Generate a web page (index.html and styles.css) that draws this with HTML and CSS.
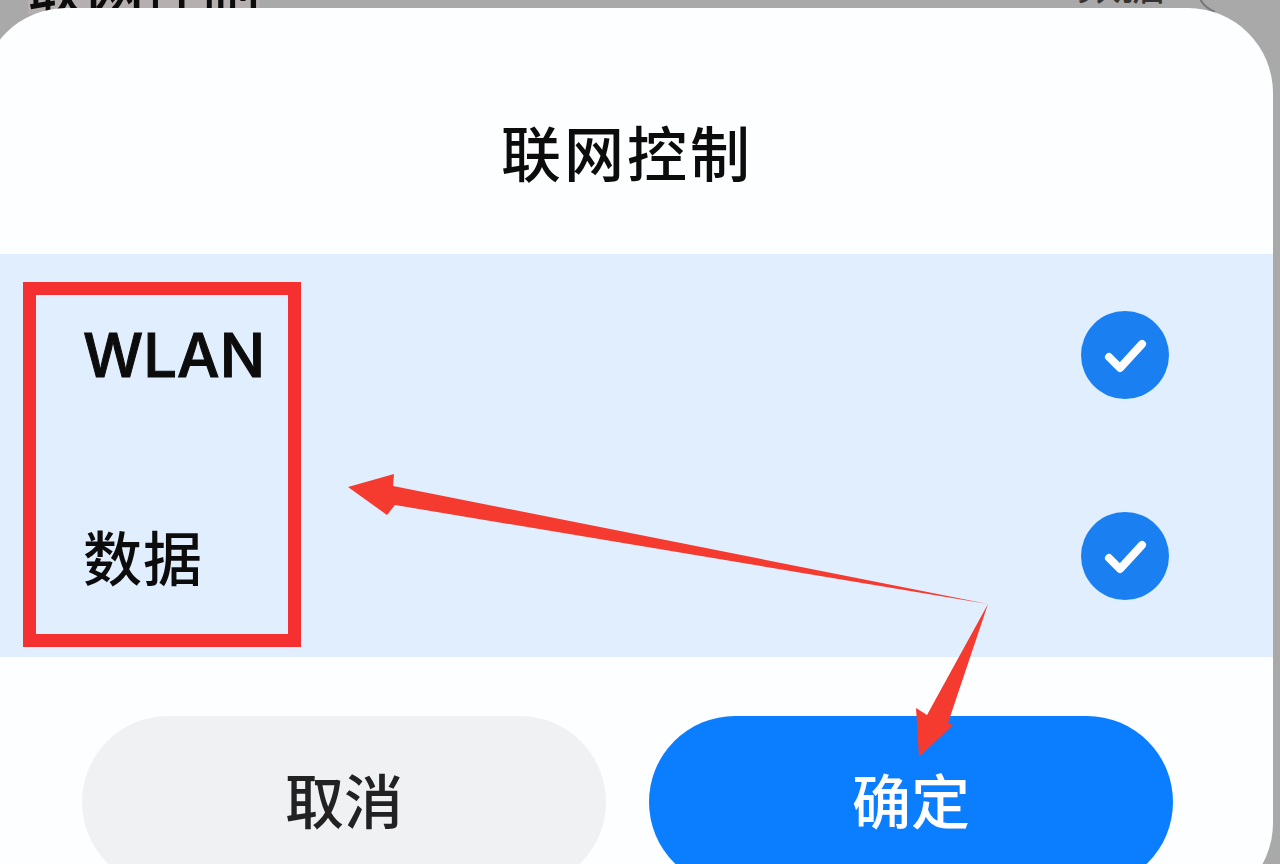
FILE: index.html
```html
<!DOCTYPE html>
<html lang="zh-CN">
<head>
<meta charset="utf-8">
<title>联网控制</title>
<link rel="stylesheet" href="styles.css">
</head>
<body>
<main class="screen">
  <header class="behind">
    <span class="behind-title">联网控制</span>
    <span class="behind-action">数据</span>
  </header>
  <svg class="corner" viewBox="0 0 40 20" width="40" height="20" aria-hidden="true"><path d="M0 -1 C3 5 8 9 15 12" fill="none" stroke="#77777a" stroke-width="2"/></svg>
  <section class="dialog">
    <h1 class="title">联网控制</h1>
    <ul class="list">
      <li class="row">
        <span class="label label-latin">WLAN</span>
        <svg class="check" viewBox="0 0 88 88" aria-hidden="true"><circle cx="44" cy="44" r="44" fill="#1a80f2"/><path d="M28 46 L39 57 L61 33" fill="none" stroke="#fff" stroke-width="8" stroke-linecap="round" stroke-linejoin="round"/></svg>
      </li>
      <li class="row">
        <span class="label">数据</span>
        <svg class="check" viewBox="0 0 88 88" aria-hidden="true"><circle cx="44" cy="44" r="44" fill="#1a80f2"/><path d="M28 46 L39 57 L61 33" fill="none" stroke="#fff" stroke-width="8" stroke-linecap="round" stroke-linejoin="round"/></svg>
      </li>
    </ul>
    <div class="actions">
      <button class="btn btn-cancel">取消</button>
      <button class="btn btn-ok">确定</button>
    </div>
  </section>
  <div class="mark-box"></div>
  <svg class="arrows" viewBox="0 0 1280 864" aria-hidden="true">
    <polygon points="348,487 394,474 393,486 988,604 395,505 387,515" fill="#f53a30"/>
    <polygon points="988,604 948,723 953,725 919,757 916,708 927,715" fill="#f53a30"/>
  </svg>
</main>
</body>
</html>
```
FILE: styles.css
```css
* { box-sizing: border-box; }

html, body {
  margin: 0;
  padding: 0;
  height: 100%;
}

body {
  overflow: hidden;
  background: #a9a9a9;
  font-family: "Inter", "Noto Sans CJK SC", sans-serif;
  color: #0c0c0c;
}

.screen {
  position: relative;
  width: 1280px;
  height: 864px;
  overflow: hidden;
}

.behind {
  display: flex;
  justify-content: space-between;
  align-items: flex-end;
  height: 14px;
  padding: 0 115px 0 28px;
  overflow: hidden;
}

.behind-title {
  font: 500 58px/70px "Noto Sans CJK SC", sans-serif;
  margin-bottom: -8px;
  background: #b5afaf;
}

.behind-action {
  font: 400 44px/54px "Noto Sans CJK SC", sans-serif;
  margin-bottom: 6px;
  color: #333;
}

.corner {
  position: absolute;
  left: 1200px;
  top: 0;
}

.dialog {
  position: absolute;
  left: -19px;
  top: 8px;
  width: 1292px;
  height: 900px;
  background: #fdfeff;
  border-radius: 85px;
  overflow: hidden;
}

.title {
  margin: 0;
  height: 246px;
  padding-top: 105px;
  text-align: center;
  font: 500 60px/76px "Noto Sans CJK SC", sans-serif;
  letter-spacing: 3px;
}

.list {
  list-style: none;
  margin: 0;
  padding: 0;
  background: #e1eefd;
}

.row {
  display: flex;
  align-items: center;
  justify-content: space-between;
  height: 201.5px;
  padding: 0 104px 0 102px;
}

.label {
  font: 500 59px/70px "Noto Sans CJK SC", sans-serif;
  letter-spacing: 1px;
}

.label-latin {
  font-family: "Inter", sans-serif;
  font-size: 60px;
  font-weight: 500;
  letter-spacing: 0;
  -webkit-text-stroke: 1px #0c0c0c;
}

.check {
  width: 88px;
  height: 88px;
  flex: none;
}

.actions {
  display: flex;
  gap: 43px;
  padding: 59px 0 0 101px;
}

.btn {
  width: 524px;
  height: 172px;
  border: 0;
  border-radius: 86px;
  font: 500 59px/70px "Noto Sans CJK SC", sans-serif;
  padding: 0 0 6px;
  letter-spacing: 0;
}

.btn-cancel {
  background: #f0f1f2;
  color: #222;
}

.btn-ok {
  background: #0a7eff;
  color: #fff;
}

.mark-box {
  position: absolute;
  left: 23px;
  top: 282px;
  width: 278px;
  height: 365px;
  border: 13px solid #f53030;
}

.arrows {
  position: absolute;
  left: 0;
  top: 0;
  width: 1280px;
  height: 864px;
}
```
